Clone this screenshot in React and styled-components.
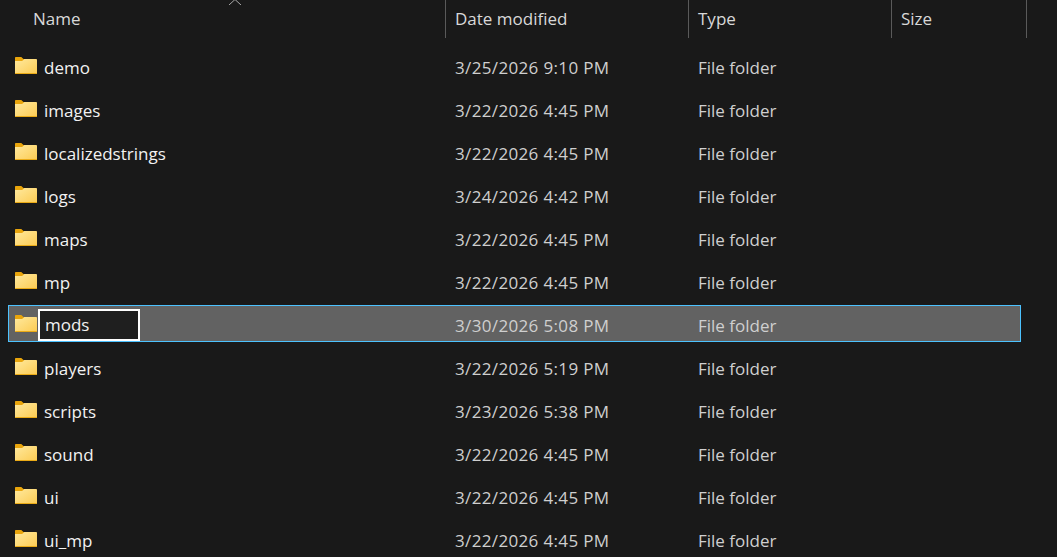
import React from "react";
import styled, { createGlobalStyle } from "styled-components";

const GlobalStyle = createGlobalStyle`
  html, body {
    margin: 0;
    padding: 0;
    height: 100%;
    background: #191919;
    overflow: hidden;
  }
`;

const Window = styled.div`
  position: relative;
  width: 1057px;
  height: 557px;
  overflow: hidden;
  background: #191919;
  font-family: "Open Sans", "Noto Sans", sans-serif;
  font-size: 17px;
`;

const columns = "437px 243px 203px";

const Header = styled.div`
  display: grid;
  grid-template-columns: ${columns} 135px;
  height: 38px;
  margin: 0 0 9px 9px;
  width: 1018px;
`;

const HeaderCell = styled.div`
  display: flex;
  align-items: center;
  height: 36px;
  box-sizing: content-box;
  padding: 0 0 2px ${(p) => p.$left || 9}px;
  border-right: 1px solid #5a5a5a;
  color: #d8d8d8;
`;

const SortCaret = styled.svg`
  position: absolute;
  left: 228px;
  top: -1px;
`;

const Rows = styled.div`
  display: flex;
  flex-direction: column;
  gap: 6px;
  width: 1013px;
  margin-left: 8px;
`;

const Row = styled.div`
  display: grid;
  grid-template-columns: ${columns} 130px;
  flex: none;
  height: 37px;
  box-sizing: border-box;
  border: 1px solid ${(p) => (p.$selected ? "#4cc2ff" : "transparent")};
  background: ${(p) => (p.$selected ? "#626262" : "transparent")};
`;

const NameCell = styled.div`
  display: flex;
  align-items: center;
  gap: ${(p) => (p.$editing ? 1 : 7)}px;
  padding: 3px 0 0 6px;
  color: #f2f2f2;
  white-space: nowrap;
`;

const Cell = styled.div`
  display: flex;
  align-items: center;
  padding: 3px 0 0 9px;
  color: #cfcfcf;
  white-space: nowrap;
  letter-spacing: ${(p) => (p.$date ? "0.35px" : "0")};
`;

const RenameBox = styled.div`
  display: flex;
  align-items: center;
  align-self: flex-end;
  width: 102px;
  height: 32px;
  box-sizing: border-box;
  padding: 0 0 2px 5px;
  border: 2px solid #ffffff;
  background: #1f1f1f;
  color: #f2f2f2;
`;

const FolderSvg = styled.svg`
  flex: none;
  align-self: flex-start;
  margin-top: 6px;
`;

const FolderIcon = () => (
  <FolderSvg width="22" height="17" viewBox="0 0 22 17">
    <defs>
      <linearGradient id="folderBody" x1="0" y1="0" x2="1" y2="1">
        <stop offset="0" stopColor="#ffe99e" />
        <stop offset="1" stopColor="#fccb52" />
      </linearGradient>
    </defs>
    <path d="M0 1C0 .4.4 0 1 0h4.800c.4 0 .7.1 1 .4L8.500 2H12v4H0z" fill="#e9a50c" />
    <path
      d="M0 4h6.800c.4 0 .7-.1 1-.4L9.400 2h11.800c.4 0 .8.4.8.8V16c0 .6-.4 1-1 1H1c-.6 0-1-.4-1-1z"
      fill="url(#folderBody)"
    />
    <path d="M0 16h22c0 .6-.4 1-1 1H1c-.6 0-1-.4-1-1z" fill="#eaaa16" />
  </FolderSvg>
);

const folders = [
  { name: "demo", date: "3/25/2026 9:10 PM" },
  { name: "images", date: "3/22/2026 4:45 PM" },
  { name: "localizedstrings", date: "3/22/2026 4:45 PM" },
  { name: "logs", date: "3/24/2026 4:42 PM" },
  { name: "maps", date: "3/22/2026 4:45 PM" },
  { name: "mp", date: "3/22/2026 4:45 PM" },
  { name: "mods", date: "3/30/2026 5:08 PM", editing: true },
  { name: "players", date: "3/22/2026 5:19 PM" },
  { name: "scripts", date: "3/23/2026 5:38 PM" },
  { name: "sound", date: "3/22/2026 4:45 PM" },
  { name: "ui", date: "3/22/2026 4:45 PM" },
  { name: "ui_mp", date: "3/22/2026 4:45 PM" },
];

const App = () => (
  <Window>
    <GlobalStyle />
    <Header>
      <HeaderCell $left={24}>Name</HeaderCell>
      <HeaderCell>Date modified</HeaderCell>
      <HeaderCell>Type</HeaderCell>
      <HeaderCell>Size</HeaderCell>
    </Header>
    <SortCaret width="14" height="6" viewBox="0 0 14 6">
      <path d="M1 6 7 .5 13 6" fill="none" stroke="#a8a8a8" strokeWidth="1" />
    </SortCaret>
    <Rows>
      {folders.map((f) => (
        <Row key={f.name} $selected={f.editing}>
          <NameCell $editing={f.editing}>
            <FolderIcon />
            {f.editing ? <RenameBox>{f.name}</RenameBox> : f.name}
          </NameCell>
          <Cell $date>{f.date}</Cell>
          <Cell>File folder</Cell>
          <Cell />
        </Row>
      ))}
    </Rows>
  </Window>
);

export default App;
